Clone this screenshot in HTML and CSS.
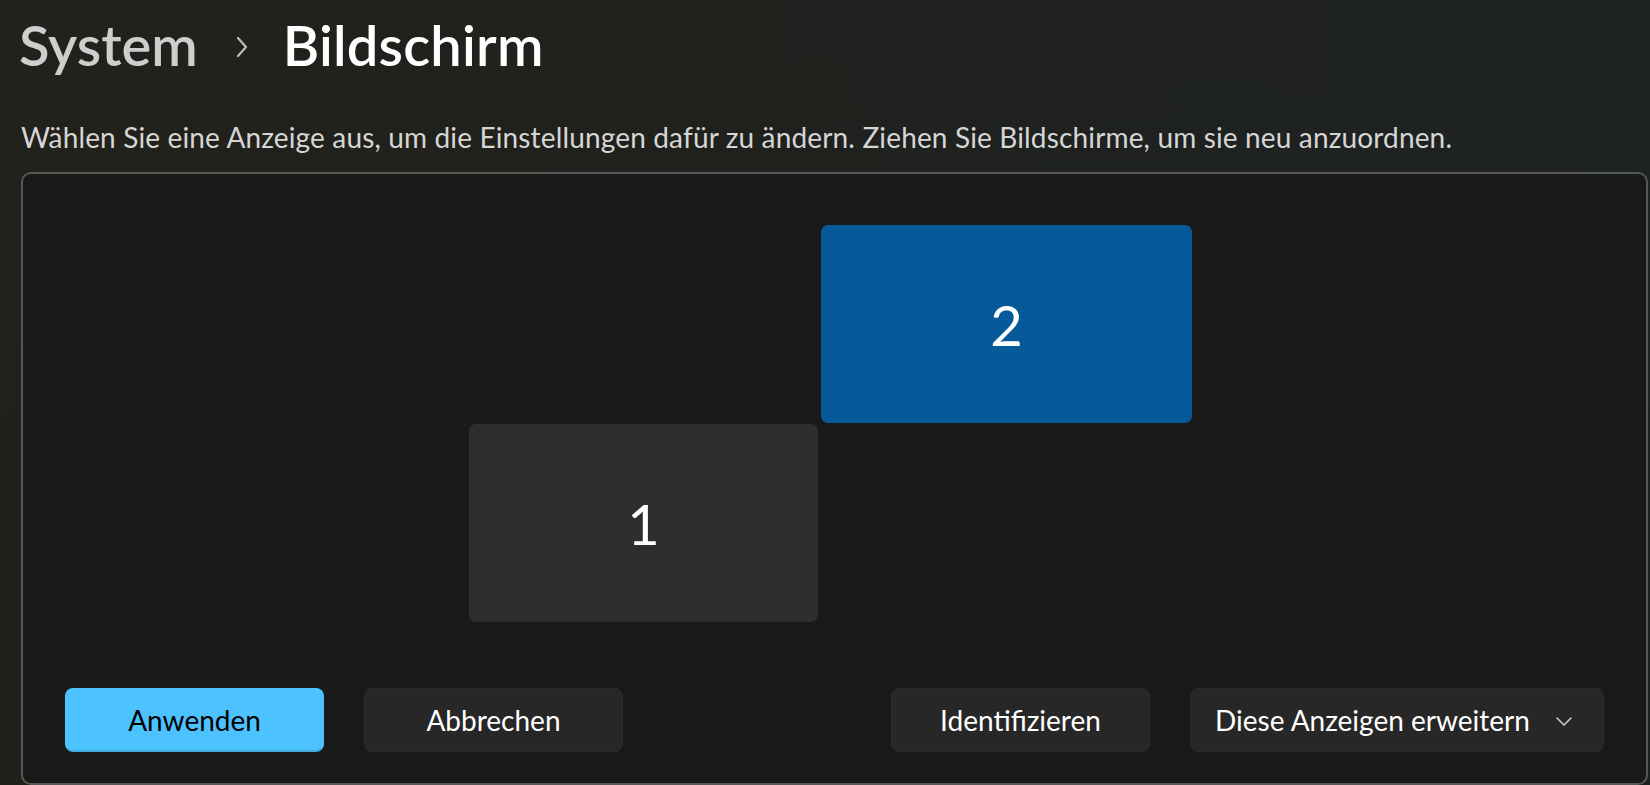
FILE: index.html
```html
<!DOCTYPE html>
<html lang="de">
<head>
<meta charset="utf-8">
<title>Bildschirm</title>
<link rel="stylesheet" href="styles.css">
</head>
<body>
<div class="page">
  <header class="breadcrumb">
    <span class="crumb-parent">System</span>
    <svg class="crumb-sep" width="14" height="22" viewBox="0 0 14 22"><path d="M3 2 L11 11 L3 20" fill="none" stroke="#bdbdbd" stroke-width="2.2" stroke-linecap="round" stroke-linejoin="round"/></svg>
    <span class="crumb-current">Bildschirm</span>
  </header>
  <p class="description">Wählen Sie eine Anzeige aus, um die Einstellungen dafür zu ändern. Ziehen Sie Bildschirme, um sie neu anzuordnen.</p>
  <section class="panel">
    <div class="canvas">
      <div class="monitor monitor-2 selected">2</div>
      <div class="monitor monitor-1">1</div>
    </div>
    <div class="actions">
      <div class="group">
        <button class="btn accent">Anwenden</button>
        <button class="btn">Abbrechen</button>
      </div>
      <div class="group">
        <button class="btn">Identifizieren</button>
        <button class="btn dropdown"><span>Diese Anzeigen erweitern</span>
          <svg width="16" height="9" viewBox="0 0 16 9"><path d="M1 1 L8 8 L15 1" fill="none" stroke="#c8c8c8" stroke-width="1.6" stroke-linecap="round" stroke-linejoin="round"/></svg>
        </button>
      </div>
    </div>
  </section>
</div>
</body>
</html>
```
FILE: styles.css
```css
html, body {
  margin: 0;
  padding: 0;
  width: 1650px;
  height: 785px;
  overflow: hidden;
}
body {
  font-family: Lato, "Noto Sans", sans-serif;
  color: #ffffff;
  background:
    linear-gradient(to bottom, rgba(0,0,0,0) 0%, rgba(20,30,20,0.25) 100%),
    linear-gradient(to right, #23211c 0%, #21211d 35%, #1f2220 70%, #1e2223 100%);
}
.page {
  padding: 11px 2px 0 21px;
  box-sizing: border-box;
  height: 785px;
  display: flex;
  flex-direction: column;
}
.breadcrumb {
  display: flex;
  align-items: center;
  gap: 0;
  font-size: 56px;
  line-height: 67px;
  font-weight: 600;
  margin-left: -2px;
}
.crumb-parent {
  color: #cecece;
}
.crumb-sep {
  margin: 0 34px 0 37px;
  position: relative;
  top: 2px;
}
.crumb-current {
  color: #ffffff;
  letter-spacing: 0.2px;
}
.description {
  margin: 42px 0 0 0;
  font-size: 28px;
  line-height: 34px;
  color: #d6d6d6;
  letter-spacing: 0.15px;
}
.panel {
  margin-top: 18px;
  height: 613px;
  box-sizing: border-box;
  border: 2px solid #555855;
  border-radius: 10px;
  background: #191919;
  display: flex;
  flex-direction: column;
}
.canvas {
  position: relative;
  flex: 1;
}
.monitor {
  position: absolute;
  height: 198px;
  border-radius: 7px;
  display: flex;
  align-items: center;
  justify-content: center;
  font-size: 56px;
  font-weight: 400;
  color: #ffffff;
  background: #2e2e2e;
}
.monitor-2 {
  left: 798px;
  top: 51px;
  width: 371px;
}
.monitor-1 {
  left: 446px;
  top: 250px;
  width: 349px;
}
.monitor.selected {
  background: #075a9a;
}
.actions {
  display: flex;
  justify-content: space-between;
  padding: 0 42px;
  margin-bottom: 31px;
}
.group {
  display: flex;
  gap: 40px;
}
.btn {
  height: 64px;
  width: 259px;
  box-sizing: border-box;
  border: 1px solid #2c2c2c;
  border-radius: 8px;
  background: #272727;
  color: #ffffff;
  font-family: Lato, "Noto Sans", sans-serif;
  font-size: 28px;
  padding: 0;
  display: flex;
  align-items: center;
  justify-content: center;
}
.btn.accent {
  background: #4cc2ff;
  border-color: #4cc2ff;
  border-bottom: 2px solid #42a9de;
  color: #000000;
}
.btn.dropdown {
  width: 414px;
  justify-content: space-between;
  padding: 0 31px 0 24px;
}
.btn.dropdown svg {
  margin-top: 2px;
}
```
